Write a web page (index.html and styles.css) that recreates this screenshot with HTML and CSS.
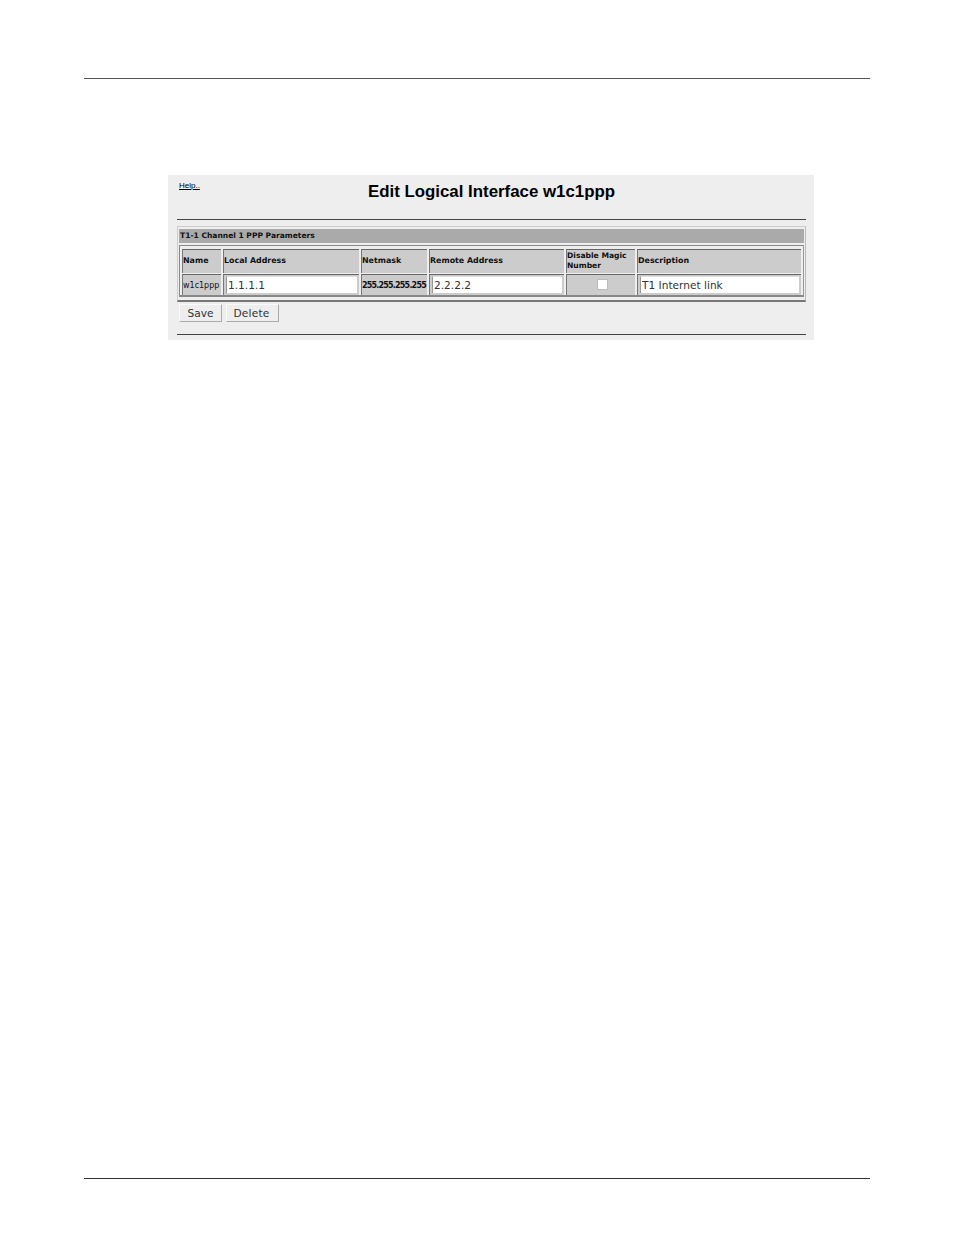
FILE: index.html
```html
<!DOCTYPE html>
<html lang="en">
<head>
<meta charset="utf-8">
<title>Edit Logical Interface w1c1ppp</title>
<link rel="stylesheet" href="styles.css">
</head>
<body>
<div class="page">
  <main class="main">
    <section class="panel">
      <div class="head">
        <a class="help" href="#">Help..</a>
        <h1 class="title">Edit Logical Interface w1c1ppp</h1>
      </div>
      <hr class="rule">
      <div class="group">
        <div class="group-title">T1-1 Channel 1 PPP Parameters</div>
        <div class="grid">
          <div class="cell th">Name</div>
          <div class="cell th">Local Address</div>
          <div class="cell th">Netmask</div>
          <div class="cell th">Remote Address</div>
          <div class="cell th wrap">Disable Magic Number</div>
          <div class="cell th">Description</div>
          <div class="cell td small">w1c1ppp</div>
          <div class="cell td"><input class="field" type="text" value="1.1.1.1"></div>
          <div class="cell td mask">255.255.255.255</div>
          <div class="cell td"><input class="field" type="text" value="2.2.2.2"></div>
          <div class="cell td center"><span class="check"></span></div>
          <div class="cell td"><input class="field" type="text" value="T1 Internet link"></div>
        </div>
      </div>
      <div class="actions">
        <button class="btn save" type="button">Save</button>
        <button class="btn delete" type="button">Delete</button>
      </div>
      <hr class="rule">
    </section>
  </main>
</div>
</body>
</html>
```
FILE: styles.css
```css
* { box-sizing: border-box; }
html, body { margin: 0; padding: 0; background: #fff; }
.page {
  width: 954px;
  height: 1235px;
  padding: 78px 84px 56px;
}
.main {
  height: 1101px;
  border-top: 1px solid #555;
  border-bottom: 1px solid #333;
  padding: 96px 56px 0 84px;
}
.panel {
  width: 646px;
  height: 165px;
  background: #eee;
  padding: 0 8px 0 9px;
  font-family: "DejaVu Sans", sans-serif;
  color: #111;
}
.head {
  height: 44px;
  position: relative;
}
.help {
  position: absolute;
  left: 2px;
  top: 6px;
  font: 8px/10px "Liberation Sans", sans-serif;
  color: #000;
}
.title {
  margin: 0;
  padding-top: 6px;
  text-align: center;
  font: bold 16.85px/21px "Liberation Sans", sans-serif;
  color: #000;
}
.rule {
  margin: 0;
  border: 0;
  height: 1px;
  background: #444;
}
.group {
  margin-top: 6px;
  height: 76px;
  width: 629px;
  border: 1px solid #ccc;
  border-right-color: #bbb;
  border-bottom: 2px solid #777;
  padding: 2px 1px 0;
}
.group-title {
  height: 14px;
  background: #aaa;
  font: bold 7.55px/14px "DejaVu Sans", sans-serif;
  padding-left: 1px;
  white-space: nowrap;
}
.grid {
  margin-top: 2px;
  height: 52px;
  width: 625px;
  border: 1px solid #888;
  border-right-color: #999;
  border-bottom: 2px solid #888;
  padding: 3px 1px 0 2px;
  display: grid;
  grid-template-columns: 39px 136px 66px 135px 69px 164px;
  grid-template-rows: 24px 21px;
  column-gap: 2px;
  row-gap: 1px;
}
.cell {
  background: #ccc;
  border-top: 1px solid #666;
  border-left: 1px solid #777;
  display: flex;
  align-items: center;
  min-width: 0;
  overflow: hidden;
}
.th {
  font: bold 7.9px/10px "DejaVu Sans", sans-serif;
  padding: 0 0 1px 0;
  white-space: nowrap;
}
.wrap {
  white-space: normal;
  font-size: 7.6px;
  padding: 0 0 2px 0;
}
.td { padding: 1px 2px 2px 2px; }
.small {
  font: 8px/10px "DejaVu Sans", sans-serif;
  padding: 2px 0 0 0;
  white-space: nowrap;
}
.mask {
  font: bold 8px/10px "DejaVu Sans", sans-serif;
  letter-spacing: -0.8px;
  padding: 2px 0 0 0;
  white-space: nowrap;
}
.center { justify-content: center; }
.check {
  width: 11px;
  height: 11px;
  background: #fff;
  border: 1px solid #bbb;
  margin-left: 2px;
}
.field {
  width: 100%;
  height: 17px;
  margin: 0;
  border: 0;
  border-left: 1px solid #999;
  border-top: 1px solid #ddd;
  background: #fff;
  font: 10.6px/15px "DejaVu Sans", sans-serif;
  color: #333;
  padding: 0 0 0 1px;
}
.actions {
  display: flex;
  gap: 4px;
  margin-top: 2px;
  padding-left: 2px;
  height: 30px;
}
.btn {
  height: 18px;
  margin: 0;
  background: #eee;
  border: 1px solid #ccc;
  border-right-color: #aaa;
  border-bottom-color: #aaa;
  border-top-color: #fafafa;
  border-left-color: #fafafa;
  font: 10.6px/15px "DejaVu Sans", sans-serif;
  color: #333;
  padding: 0;
}
.save { width: 43px; }
.delete { width: 53px; letter-spacing: 0.2px; padding-right: 2px; }
```
